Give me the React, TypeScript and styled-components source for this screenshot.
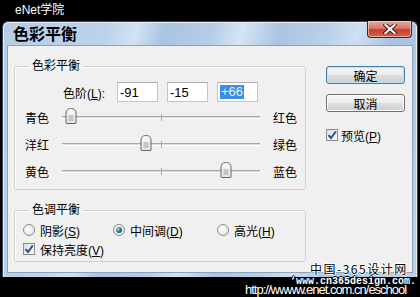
import styled, { createGlobalStyle } from 'styled-components';

const GlobalStyle = createGlobalStyle`
  html, body {
    margin: 0;
    padding: 0;
    background: #000;
  }
  #root {
    width: 420px;
    height: 297px;
    overflow: hidden;
  }
`;

const UI_FONT = `"Liberation Sans", "Noto Sans CJK SC", sans-serif`;

const sliders = [
  { left: '青色', right: '红色', value: -91 },
  { left: '洋红', right: '绿色', value: -15 },
  { left: '黄色', right: '蓝色', value: 66 },
];

const CheckMark = () => (
  <svg width='10' height='10' viewBox='0 0 10 10'>
    <path d='M1.5 5.2 L4 8 L8.8 1.5' fill='none' stroke='#2a4b9a' strokeWidth='2' />
  </svg>
);

const CloseGlyph = () => (
  <svg width='14' height='10' viewBox='0 0 14 10'>
    <path d='M2.5 1 L11.5 9 M11.5 1 L2.5 9' stroke='#4a1410' strokeWidth='4' strokeLinecap='square' />
    <path d='M2.5 1 L11.5 9 M11.5 1 L2.5 9' stroke='#fff' strokeWidth='2.2' strokeLinecap='square' />
  </svg>
);

const App = () => {
  return (
    <Page>
      <GlobalStyle />
      <TopBar>eNet学院</TopBar>
      <Window>
        <TitleBar>
          <Title>色彩平衡</Title>
          <CloseButton>
            <CloseGlyph />
          </CloseButton>
        </TitleBar>
        <Client>
          <LeftColumn>
            <GroupBox>
              <Legend>色彩平衡</Legend>
              <LevelRow>
                <LevelLabel>
                  色阶(<u>L</u>):
                </LevelLabel>
                <Field>-91</Field>
                <Field>-15</Field>
                <Field>
                  <Selected>+66</Selected>
                </Field>
              </LevelRow>
              {sliders.map((s) => (
                <SliderRow key={s.left}>
                  <SideLabel>{s.left}</SideLabel>
                  <Track>
                    <Tick />
                    <Thumb style={{ left: `${((s.value + 100) / 200) * 100}%` }}>
                      <ThumbGrip />
                    </Thumb>
                  </Track>
                  <SideLabel>{s.right}</SideLabel>
                </SliderRow>
              ))}
            </GroupBox>
            <GroupBox $gap>
              <Legend>色调平衡</Legend>
              <RadioRow>
                <Option>
                  <Radio />
                  <span>
                    阴影(<u>S</u>)
                  </span>
                </Option>
                <Option>
                  <Radio $checked />
                  <span>
                    中间调(<u>D</u>)
                  </span>
                </Option>
                <Option>
                  <Radio />
                  <span>
                    高光(<u>H</u>)
                  </span>
                </Option>
              </RadioRow>
              <Option>
                <Check>
                  <CheckMark />
                </Check>
                <span>
                  保持亮度(<u>V</u>)
                </span>
              </Option>
            </GroupBox>
          </LeftColumn>
          <ButtonColumn>
            <Button $default>确定</Button>
            <Button>取消</Button>
            <PreviewOption>
              <Check>
                <CheckMark />
              </Check>
              <span>
                预览(<u>P</u>)
              </span>
            </PreviewOption>
          </ButtonColumn>
        </Client>
      </Window>
      <Footer>
        <SiteMark>中国-365设计网</SiteMark>
        <PixelMark>‘www.cn365design.com.</PixelMark>
        <UrlMark>http://wwww.enet.com.cn/eschool</UrlMark>
      </Footer>
    </Page>
  );
};

const Page = styled.div`
  position: relative;
  display: flex;
  flex-direction: column;
  width: 420px;
  height: 297px;
  background: #000;
  font-family: ${UI_FONT};
  font-size: 12px;
  color: #000;
`;

const TopBar = styled.div`
  flex-shrink: 0;
  height: 21px;
  padding-left: 15px;
  line-height: 21px;
  color: #fff;
  font-size: 12px;
`;

const Window = styled.div`
  display: flex;
  flex-direction: column;
  height: 256px;
  margin: 0 2px;
  padding: 0 4px 4px 4px;
  border: 1px solid #34465c;
  border-bottom: none;
  border-radius: 6px 6px 0 0;
  box-sizing: border-box;
  background: linear-gradient(
    105deg,
    #b7cde6 0%,
    #bcd2ea 22%,
    #d3e2f2 28%,
    #a9c3e2 34%,
    #b6cde8 44%,
    #d6e4f3 50%,
    #aac4e2 58%,
    #bad0ea 68%,
    #d0dff0 74%,
    #a8c2e0 82%,
    #bcd1e9 100%
  );
  box-shadow: inset 1px 1px 0 #e3edf8, inset -1px 0 0 #e3edf8;
`;

const TitleBar = styled.div`
  display: flex;
  align-items: flex-start;
  height: 23px;
  flex-shrink: 0;
`;

const Title = styled.div`
  padding-left: 6px;
  font-family: "Noto Sans CJK SC", sans-serif;
  font-size: 16px;
  font-weight: bold;
  line-height: 23px;
`;

const CloseButton = styled.div`
  display: flex;
  align-items: center;
  justify-content: center;
  width: 45px;
  height: 17px;
  margin: -1px 1px 0 auto;
  border: 1px solid #5a1c16;
  border-top: none;
  border-radius: 0 0 4px 4px;
  box-sizing: border-box;
  background: linear-gradient(#e8aa9a 0%, #d9786a 45%, #c2402f 55%, #d2624c 100%);
  box-shadow: inset 0 0 0 1px rgba(255, 220, 210, 0.6);
`;

const Client = styled.div`
  flex: 1;
  display: flex;
  align-items: flex-start;
  gap: 20px;
  padding: 13px 7px 0 6px;
  border: 1px solid #8ea3ba;
  background: #f0f0f0;
`;

const LeftColumn = styled.div`
  display: flex;
  flex-direction: column;
  width: 292px;
`;

const GroupBox = styled.fieldset<{ $gap?: boolean }>`
  margin: ${(p) => (p.$gap ? '13px' : '0')} 0 0;
  padding: 0 8px 4px;
  min-width: 0;
  border: 1px solid #d0d0d0;
  border-radius: 3px;
  box-shadow: inset 1px 1px 0 #fff;
`;

const Legend = styled.legend`
  margin-left: 6px;
  padding: 0 3px;
  font-size: 12px;
  line-height: 14px;
`;

const LevelRow = styled.div`
  display: flex;
  align-items: center;
  gap: 9px;
  margin: 9px 0 2px;
  padding-left: 40px;
`;

const LevelLabel = styled.span`
  width: 45px;
  white-space: nowrap;
`;

const Field = styled.div`
  display: flex;
  align-items: center;
  width: 41px;
  height: 20px;
  padding-left: 2px;
  box-sizing: border-box;
  border: 1px solid #c2c6cc;
  border-top-color: #abadb3;
  background: #fff;
  font-size: 13px;
`;

const Selected = styled.span`
  padding: 0 1px;
  background: #3a8ee6;
  color: #e8f2ff;
  line-height: 14px;
`;

const SliderRow = styled.div`
  display: grid;
  grid-template-columns: 24px 198px 24px;
  column-gap: 13px;
  align-items: center;
  height: 27px;
  padding-left: 2px;
`;

const SideLabel = styled.span`
  white-space: nowrap;
`;

const Track = styled.div`
  position: relative;
  height: 1px;
  border-top: 1px solid #a6a6a6;
  border-bottom: 1px solid #ffffff;
  background: #dcdcdc;
`;

const Tick = styled.div`
  position: absolute;
  left: 50%;
  top: -3px;
  width: 1px;
  height: 7px;
  background: #a6a6a6;
`;

const Thumb = styled.div`
  position: absolute;
  top: -9px;
  width: 11px;
  height: 16px;
  transform: translateX(-50%);
  box-sizing: border-box;
  border: 1px solid #666;
  border-radius: 5px 5px 1px 1px;
  background: linear-gradient(#fbfbfb, #e4e4e4);
  display: flex;
  justify-content: center;
  align-items: flex-end;
  padding-bottom: 2px;
`;

const ThumbGrip = styled.div`
  width: 5px;
  height: 6px;
  background: #c6c6c6;
`;

const RadioRow = styled.div`
  display: grid;
  grid-template-columns: 90px 104px auto;
  margin: 5px 0 3px;
`;

const Option = styled.div`
  display: flex;
  align-items: center;
  gap: 5px;
  height: 16px;
  white-space: nowrap;
`;

const Radio = styled.span<{ $checked?: boolean }>`
  position: relative;
  width: 12px;
  height: 12px;
  box-sizing: border-box;
  border: 1px solid #8a8c8e;
  border-radius: 50%;
  background: radial-gradient(circle at 40% 40%, #ffffff, #dcdcdc);
  &::after {
    content: '';
    display: ${(p) => (p.$checked ? 'block' : 'none')};
    position: absolute;
    left: 2px;
    top: 2px;
    width: 6px;
    height: 6px;
    border-radius: 50%;
    background: radial-gradient(circle at 35% 35%, #8fe0f5, #1f6a86 55%, #13384a);
  }
`;

const Check = styled.span`
  display: flex;
  align-items: center;
  justify-content: center;
  width: 12px;
  height: 12px;
  box-sizing: border-box;
  border: 1px solid #8a8c8e;
  background: linear-gradient(135deg, #dedede, #fbfbfb);
`;

const ButtonColumn = styled.div`
  display: flex;
  flex-direction: column;
  gap: 10px;
  width: 79px;
  margin-top: 7px;
`;

const Button = styled.div<{ $default?: boolean }>`
  display: flex;
  align-items: center;
  justify-content: center;
  height: 18px;
  box-sizing: border-box;
  border: 1px solid ${(p) => (p.$default ? '#3c7fb1' : '#707070')};
  border-radius: 3px;
  background: linear-gradient(#f4f4f4 0%, #ececec 50%, #dddddd 51%, #cfcfcf 100%);
  box-shadow: inset 0 0 0 1px ${(p) => (p.$default ? '#b9e4f9' : '#fcfcfc')};
  font-size: 12px;
`;

const PreviewOption = styled(Option)`
  margin-top: 5px;
  gap: 3px;
`;

const Footer = styled.div`
  flex: 1;
`;

const SiteMark = styled.div`
  position: absolute;
  left: 310px;
  top: 262px;
  font-family: "Noto Sans CJK SC", sans-serif;
  font-size: 12px;
  line-height: 14px;
  letter-spacing: 1.5px;
  color: #000;
  text-shadow: 1px 0 0 #fff, -1px 0 0 #fff, 0 1px 0 #fff, 0 -1px 0 #fff;
`;

const PixelMark = styled.div`
  position: absolute;
  left: 290px;
  top: 276px;
  font-family: "Liberation Mono", monospace;
  font-size: 10px;
  font-weight: bold;
  line-height: 11px;
  color: #fff;
  text-shadow: 1px 0 0 #000, -1px 0 0 #000, 0 1px 0 #000, 0 -1px 0 #000;
`;

const UrlMark = styled.div`
  position: absolute;
  left: 245px;
  top: 282px;
  font-family: "Liberation Sans", sans-serif;
  font-size: 13px;
  line-height: 15px;
  letter-spacing: -1px;
  color: #fff;
`;

export default App;
